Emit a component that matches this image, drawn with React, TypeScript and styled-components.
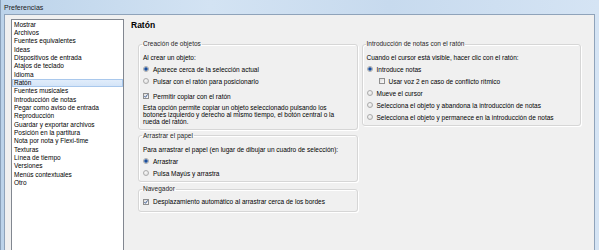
import React from 'react'
import styled, { createGlobalStyle } from 'styled-components'

const GlobalStyle = createGlobalStyle`
  html, body {
    margin: 0;
    padding: 0;
    background: #c8dbef;
  }
  body {
    font-family: 'Liberation Sans', Arial, sans-serif;
    font-size: 6.5px;
    color: #000;
  }
`

const Window = styled.div`
  width: 599px;
  height: 250px;
  overflow: hidden;
  display: flex;
  flex-direction: column;
  box-sizing: border-box;
  border-left: 1px solid #8ba1ba;
  background: linear-gradient(90deg, #bcd3ea 0%, #d3e3f3 35%, #c7daee 65%, #d5e4f4 100%);
`

const TitleBar = styled.div`
  flex: none;
  height: 14px;
  display: flex;
  align-items: center;
  padding-left: 3px;
  font-size: 7px;
  color: #1b1b1b;
`

const Client = styled.div`
  flex: 1;
  min-height: 0;
  display: flex;
  margin: 0 4px 0 3px;
  border: 1px solid #8fa3ba;
  border-bottom: none;
  background: #f0f0f0;
`

const NavList = styled.ul`
  flex: none;
  width: 113px;
  box-sizing: border-box;
  list-style: none;
  margin: 4px 0 0 6px;
  padding: 0.5px 0 0;
  background: #fff;
  border: 1px solid #828790;
  border-bottom: none;
`

const NavItem = styled.li<{ $selected?: boolean }>`
  height: 8.35px;
  line-height: 8.35px;
  padding-left: 2px;
  white-space: nowrap;
  ${p => p.$selected && `
    background: linear-gradient(#e3eefb, #d2e3f7);
    box-shadow: inset 0 0 0 1px #a9c8ec;
  `}
`

const Main = styled.main`
  flex: 1;
  min-width: 0;
  padding: 5px 13px 0 7px;
`

const Heading = styled.h1`
  margin: 0;
  font-size: 8.5px;
  line-height: 10px;
  font-weight: bold;
`

const Columns = styled.div`
  display: grid;
  grid-template-columns: 1fr 1fr;
  column-gap: 4px;
  align-items: start;
  margin: 10px 0 0 7px;
`

const Stack = styled.div`
  display: flex;
  flex-direction: column;
`

const Group = styled.fieldset<{ $top: number; $bottom: number; $space?: number }>`
  min-width: 0;
  margin: ${p => p.$space ?? 0}px 0 0;
  padding: ${p => p.$top}px 4px ${p => p.$bottom}px;
  border: 1px solid #d6d6d6;
  border-radius: 3px;
  box-shadow: inset 1px 1px 0 #fff, 1px 1px 0 #fff;
`

const Legend = styled.legend`
  padding: 0 1px;
  margin-left: -1px;
  line-height: 8px;
  color: #1e1e1e;
`

const Option = styled.div<{ $indent?: number; $space?: number }>`
  display: flex;
  align-items: center;
  gap: 4px;
  height: 12px;
  white-space: nowrap;
  padding-left: ${p => p.$indent ?? 0}px;
  margin-top: ${p => p.$space ?? 0}px;
`

const Radio = styled.span<{ $checked?: boolean }>`
  flex: none;
  width: 6px;
  height: 6px;
  box-sizing: border-box;
  border-radius: 50%;
  border: 1px solid #ababab;
  background: ${p =>
    p.$checked
      ? 'radial-gradient(circle, #1d4d98 0 1.2px, #5f8ccb 1.7px, #e6e6e6 2.3px)'
      : 'radial-gradient(circle at 40% 35%, #f7f7f7, #d9d9d9)'};
`

const Box = styled.span`
  flex: none;
  width: 6px;
  height: 6px;
  box-sizing: border-box;
  border: 1px solid #8f8f8f;
  background: linear-gradient(135deg, #dedede, #fbfbfb);
  display: flex;

  svg {
    width: 100%;
    height: 100%;
    overflow: visible;
  }
`

const Note = styled.p`
  margin: 1.7px 0 0;
  line-height: 7.2px;
`

const Check = ({ checked }: { checked?: boolean }) => (
  <Box>
    {checked && (
      <svg viewBox="0 0 4 4">
        <path d="M0.4 2.1 L1.5 3.3 L3.6 0.4" fill="none" stroke="#2d4f8a" strokeWidth="0.9" />
      </svg>
    )}
  </Box>
)

const navItems = [
  'Mostrar',
  'Archivos',
  'Fuentes equivalentes',
  'Ideas',
  'Dispositivos de entrada',
  'Atajos de teclado',
  'Idioma',
  'Ratón',
  'Fuentes musicales',
  'Introducción de notas',
  'Pegar como aviso de entrada',
  'Reproducción',
  'Guardar y exportar archivos',
  'Posición en la partitura',
  'Nota por nota y Flexi-time',
  'Texturas',
  'Línea de tiempo',
  'Versiones',
  'Menús contextuales',
  'Otro',
]

const App: React.FC = () => {
  return (
    <>
      <GlobalStyle />
      <Window>
        <TitleBar>Preferencias</TitleBar>
        <Client>
          <NavList>
            {navItems.map(item => (
              <NavItem key={item} $selected={item === 'Ratón'}>
                {item}
              </NavItem>
            ))}
          </NavList>

          <Main>
            <Heading>Ratón</Heading>
            <Columns>
              <Stack>
                <Group $top={3} $bottom={3.5}>
                  <Legend>Creación de objetos</Legend>
                  <Option>Al crear un objeto:</Option>
                  <Option>
                    <Radio $checked />
                    Aparece cerca de la selección actual
                  </Option>
                  <Option>
                    <Radio />
                    Pulsar con el ratón para posicionarlo
                  </Option>
                  <Option $space={3}>
                    <Check checked />
                    Permitir copiar con el ratón
                  </Option>
                  <Note>
                    Esta opción permite copiar un objeto seleccionado pulsando los
                    <br />
                    botones izquierdo y derecho al mismo tiempo, el botón central o la
                    <br />
                    rueda del ratón.
                  </Note>
                </Group>

                <Group $top={3.3} $bottom={2.4} $space={2}>
                  <Legend>Arrastrar el papel</Legend>
                  <Option>Para arrastrar el papel (en lugar de dibujar un cuadro de selección):</Option>
                  <Option>
                    <Radio $checked />
                    Arrastrar
                  </Option>
                  <Option>
                    <Radio />
                    Pulsa Mayús y arrastra
                  </Option>
                </Group>

                <Group $top={2.3} $bottom={3} $space={3}>
                  <Legend>Navegador</Legend>
                  <Option>
                    <Check checked />
                    Desplazamiento automático al arrastrar cerca de los bordes
                  </Option>
                </Group>
              </Stack>

              <Group $top={3} $bottom={2}>
                <Legend>Introducción de notas con el ratón</Legend>
                <Option>Cuando el cursor está visible, hacer clic con el ratón:</Option>
                <Option>
                  <Radio $checked />
                  Introduce notas
                </Option>
                <Option $indent={12}>
                  <Check />
                  Usar voz 2 en caso de conflicto rítmico
                </Option>
                <Option>
                  <Radio />
                  Mueve el cursor
                </Option>
                <Option>
                  <Radio />
                  Selecciona el objeto y abandona la introducción de notas
                </Option>
                <Option>
                  <Radio />
                  Selecciona el objeto y permanece en la introducción de notas
                </Option>
              </Group>
            </Columns>
          </Main>
        </Client>
      </Window>
    </>
  )
}

export default App
